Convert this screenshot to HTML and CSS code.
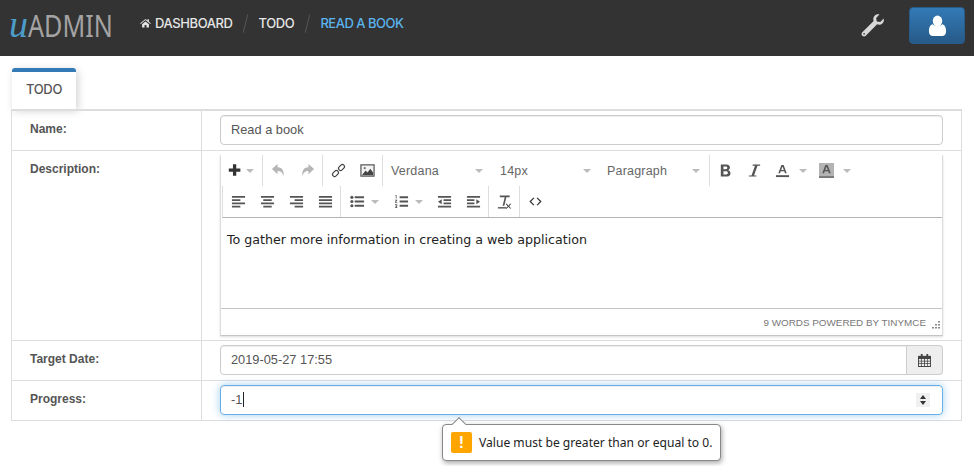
FILE: index.html
```html
<!DOCTYPE html>
<html lang="en">

<head>
    <meta charset="UTF-8">
    <title>Read a book</title>
    <link rel="stylesheet" href="styles.css">
</head>

<body>
    <header class="topbar">
        <div class="logo"><span class="logo-u">u</span><span class="logo-name">ADMIN</span></div>
        <nav class="crumbs">
            <svg class="home" viewBox="0 0 16 14"><path d="M8 1 0.3 7.4l.8 1L8 2.8l6.9 5.6.8-1L13 5.2V1.6h-2v1.9zM3 8.8V13.5h3.6V10h2.8v3.5H13V8.8L8 4.7z" fill="#e6e6e6"/></svg>
            <a class="crumb first">DASHBOARD</a>
            <span class="slash"></span>
            <a class="crumb">TODO</a>
            <span class="slash"></span>
            <a class="crumb active">READ A BOOK</a>
        </nav>
        <svg class="wrench" viewBox="0 0 26 26"><path d="M24.6 5.6c.5 1.6.2 3.7-1.1 5-1.6 1.6-3.8 2-5.7 1.2L6 23.6c-1 1-2.6 1-3.6 0s-1-2.6 0-3.6L14.2 8.2c-.8-1.900-.4-4.100 1.200-5.700 1.300-1.300 3.400-1.600 5-1.100l-3.600 3.700.6 3.700 3.700.6z" fill="#d8d8d8"/><circle cx="4.300" cy="21.700" r="1" fill="#555"/></svg>
        <button class="user-btn">
            <svg viewBox="0 0 20 20" width="19" height="22" preserveAspectRatio="none"><circle cx="10" cy="5.500" r="5" fill="#fff"/><path d="M1 15c0-4 1.500-6 4-6.500 1.200 1.200 3 1.800 5 1.800s3.800-.6 5-1.800c2.500.5 4 2.500 4 6.500 0 2.500-1.500 4-3.500 4h-11C2.500 19 1 17.500 1 15z" fill="#fff"/></svg>
        </button>
    </header>

    <div class="tabs">
        <div class="tab">TODO</div>
    </div>

    <div class="form">
        <div class="row">
            <label class="label">Name:</label>
            <div class="field">
                <input class="input" type="text" value="Read a book">
            </div>
        </div>

        <div class="row">
            <label class="label">Description:</label>
            <div class="field">
                <div class="editor">
                    <div class="toolbar">
                        <div class="group group-add">
                            <svg class="ico" viewBox="0 0 16 16"><path d="M1 6h5V1h4v5h5v4h-5v5H6v-5H1z" fill="#333" transform="translate(0 .5) scale(.88)"/></svg>
                            <span class="caret-down add-caret"></span>
                        </div>
                        <div class="group">
                            <span class="btn"><svg class="ico" viewBox="0 0 16 16"><path d="M7 1 1 6.500 7 12V8.500c3 0 5 1 6.500 5.500.5-5-1-9.500-6.500-9.500z" fill="#b5b5b5"/></svg></span>
                            <span class="btn"><svg class="ico" viewBox="0 0 16 16"><path d="M9 1l6 5.500L9 12V8.500c-3 0-5 1-6.500 5.500C2 9 3.500 4.500 9 4.500z" fill="#b5b5b5"/></svg></span>
                        </div>
                        <div class="group">
                            <span class="btn"><svg class="ico" viewBox="0 0 16 16"><g fill="none" stroke="#444" stroke-width="1.300"><rect x="-4.500" y="-2.200" width="7" height="4.400" rx="2.200" transform="translate(5.500 10.500) rotate(-45)"/><rect x="-2.500" y="-2.200" width="7" height="4.400" rx="2.200" transform="translate(10.500 5.500) rotate(-45)"/></g></svg></span>
                            <span class="btn"><svg class="ico" viewBox="0 0 16 16"><rect x="1" y="2" width="14" height="12" fill="#f4f4f4" stroke="#555" stroke-width="1.300"/><path d="M2 13l4-5 2 2 3-4 3 4v3z" fill="#444"/><circle cx="5" cy="5.500" r="1.200" fill="#777"/></svg></span>
                        </div>
                        <div class="group group-selects">
                            <span class="select select-font">Verdana<span class="caret-down"></span></span>
                            <span class="select select-size">14px<span class="caret-down"></span></span>
                            <span class="select select-block">Paragraph<span class="caret-down"></span></span>
                        </div>
                        <div class="group group-plain">
                            <span class="btn"><svg class="ico" viewBox="0 0 16 16"><path d="M3 1.500h6c2.500 0 3.700 1.400 3.700 3.300 0 1.300-.7 2.300-1.800 2.800 1.500.4 2.400 1.600 2.400 3.200 0 2.300-1.600 3.700-4.300 3.700H3zm2.800 2.200v2.900h2.600c1 0 1.500-.6 1.500-1.500s-.5-1.400-1.500-1.400zm0 5v3.600h3c1.100 0 1.700-.7 1.700-1.800s-.6-1.800-1.700-1.800z" fill="#555"/></svg></span>
                            <span class="btn"><svg class="ico" viewBox="0 0 16 16"><path d="M6 1.500h8v1.300h-2.800L7.500 13.200H10v1.300H2v-1.300h2.800L8.500 2.800H6z" fill="#555"/></svg></span>
                            <span class="btn btn-color"><svg class="ico" viewBox="0 0 16 16"><path d="M6.800 2h2.400l3.300 9h-1.900l-.7-2.100H6.100L5.400 11H3.500zm-.2 5.400h2.800L8 3.600z" fill="#555"/><rect x="1" y="13" width="14" height="2" fill="#555"/></svg><span class="caret-down"></span></span>
                            <span class="btn btn-color btn-back"><svg class="ico" viewBox="0 0 16 16"><rect x="0" y="0" width="16" height="16" fill="#b3b3b3"/><path d="M6.800 2h2.400l3.300 9h-1.900l-.7-2.100H6.100L5.400 11H3.500zm-.2 5.400h2.800L8 3.600z" fill="#555"/><rect x="0" y="14" width="16" height="2" fill="#777"/></svg><span class="caret-down"></span></span>
                        </div>
                    </div>
                    <div class="toolbar toolbar-second">
                        <div class="group">
                            <span class="btn"><svg class="ico" viewBox="0 0 16 16"><path d="M1 2h14v2H1zM1 5.500h9v2H1zM1 9h14v2H1zM1 12.500h9v2H1z" fill="#555"/></svg></span>
                            <span class="btn"><svg class="ico" viewBox="0 0 16 16"><path d="M1 2h14v2H1zM3.500 5.500h9v2h-9zM1 9h14v2H1zM3.500 12.500h9v2h-9z" fill="#555"/></svg></span>
                            <span class="btn"><svg class="ico" viewBox="0 0 16 16"><path d="M1 2h14v2H1zM6 5.500h9v2H6zM1 9h14v2H1zM6 12.500h9v2H6z" fill="#555"/></svg></span>
                            <span class="btn"><svg class="ico" viewBox="0 0 16 16"><path d="M1 2h14v2H1zM1 5.500h14v2H1zM1 9h14v2H1zM1 12.500h14v2H1z" fill="#555"/></svg></span>
                        </div>
                        <div class="group">
                            <span class="btn btn-list"><svg class="ico" viewBox="0 0 16 16"><path d="M5 2.500h10v2H5zM5 7h10v2H5zM5 11.500h10v2H5z" fill="#555"/><circle cx="2" cy="3.500" r="1.700" fill="#555"/><circle cx="2" cy="8" r="1.700" fill="#555"/><circle cx="2" cy="12.500" r="1.700" fill="#555"/></svg><span class="caret-down"></span></span>
                            <span class="btn btn-list"><svg class="ico" viewBox="0 0 16 16"><path d="M6 2.500h9v2H6zM6 7h9v2H6zM6 11.500h9v2H6z" fill="#555"/><path d="M1.500 1h1.200v3.800H1.900V1.800h-.4zM1 6h2.400v.8L2 8.400h1.500v.8H1v-.8l1.400-1.600H1zM1 11h2.400v3.800H1V14h1.500v-.7H1.400v-.7h1.100v-.8H1z" fill="#555"/></svg><span class="caret-down"></span></span>
                            <span class="btn"><svg class="ico" viewBox="0 0 16 16"><path d="M1 2h14v2H1zM7 5.500h8v2H7zM7 9h8v2H7zM1 12.500h14v2H1zM5 5.500v5.500L1 8.200z" fill="#555"/></svg></span>
                            <span class="btn"><svg class="ico" viewBox="0 0 16 16"><path d="M1 2h14v2H1zM1 5.500h8v2H1zM1 9h8v2H1zM1 12.500h14v2H1zM11 5.500v5.500l4-2.800z" fill="#555"/></svg></span>
                        </div>
                        <div class="group">
                            <span class="btn"><svg class="ico" viewBox="0 0 16 16"><path d="M3 1.500h10.500v2H10L7.800 12.500H6L8.200 3.500H3z" fill="#555"/><path d="M1 14h9v1.500H1z" fill="#555"/><path d="M10.500 10.500l1.700 1.900 1.700-1.900h1.300l-2.300 2.500 2.300 2.500h-1.300l-1.700-1.900-1.700 1.900H9.200l2.300-2.500-2.300-2.500z" fill="#333"/></svg></span>
                        </div>
                        <div class="group group-plain">
                            <span class="btn"><svg class="ico ico-code" viewBox="0 0 16 16"><path d="M6 3.500 1.500 8 6 12.500M10 3.500 14.500 8 10 12.500" fill="none" stroke="#333" stroke-width="1.500"/></svg></span>
                        </div>
                    </div>
                    <div class="content">To gather more information in creating a web application</div>
                    <div class="statusbar">
                        <span class="status-text">9 WORDS POWERED BY TINYMCE</span>
                        <svg class="grip" viewBox="0 0 9 9"><path d="M7 0h2v1.500H7zM4 3h2v1.500H4zM7 3h2v1.500H7zM1 6h2v1.500H1zM4 6h2v1.500H4zM7 6h2v1.500H7z" fill="#888"/></svg>
                    </div>
                </div>
            </div>
        </div>

        <div class="row">
            <label class="label">Target Date:</label>
            <div class="field">
                <div class="input-group">
                    <input class="input input-joined" type="text" value="2019-05-27 17:55">
                    <span class="addon">
                        <svg viewBox="0 0 14 14" width="13" height="13"><path d="M0 2h14v12H0z" fill="#444"/><path d="M3 0h2v3.500H3zM9 0h2v3.500H9z" fill="#444"/><path d="M1 5.500h2.200v1.800H1zM4 5.500h2.500v1.800H4zM7.400 5.500h2.600v1.800H7.400zM10.800 5.500H13v1.800h-2.200zM1 8.200h2.200V10H1zM4 8.200h2.500V10H4zM7.400 8.200h2.600V10H7.400zM10.800 8.200H13V10h-2.200zM1 10.900h2.200v1.900H1zM4 10.900h2.500v1.900H4zM7.400 10.900h2.600v1.900H7.400zM10.800 10.900H13v1.900h-2.200z" fill="#eee"/></svg>
                    </span>
                </div>
            </div>
        </div>

        <div class="row">
            <label class="label">Progress:</label>
            <div class="field">
                <div class="input input-focus">
                    <span>-1</span><span class="text-cursor"></span>
                    <span class="spinner"><span class="spin-up"></span><span class="spin-down"></span></span>
                </div>
                <div class="valid-tip">
                    <span class="valid-arrow"></span>
                    <span class="valid-icon">!</span>
                    <span class="valid-text">Value must be greater than or equal to 0.</span>
                </div>
            </div>
        </div>
    </div>
</body>

</html>
```

FILE: styles.css
```css
html,
body {
    height: 100%;
}

body {
    margin: 0;
    background: #fff;
    color: #555;
    font-family: "Liberation Sans", Arial, sans-serif;
    font-size: 13px;
}

.topbar {
    display: flex;
    align-items: center;
    height: 56px;
    background: #333;
    padding: 0 9px 0 9px;
    box-sizing: border-box;
}

.logo {
    width: 131px;
    margin-top: -8px;
    font-family: "Noto Sans", sans-serif;
    font-size: 31px;
    color: #a3a3a3;
    white-space: nowrap;
}

.logo-u {
    font-family: "Liberation Serif", serif;
    font-style: italic;
    font-size: 38px;
    color: #4d9cc9;
}

.logo-name {
    display: inline-block;
    transform: scaleX(0.81);
    transform-origin: left center;
}

.crumbs {
    display: flex;
    align-items: center;
    flex: 1;
    margin-top: -10px;
    font-family: "Inter", sans-serif;
    font-weight: 500;
    font-size: 13px;
    letter-spacing: -0.4px;
    color: #e6e6e6;
}

.home {
    width: 11px;
    height: 10px;
    margin-right: 4px;
}

.slash {
    width: 1px;
    height: 19px;
    margin: 0 12.500px;
    background: #555;
    transform: rotate(14deg);
}

.active {
    color: #5bb4ee;
    letter-spacing: -0.5px;
}

.wrench {
    width: 25px;
    height: 25px;
    margin: -6px 24px 0 0;
}

.user-btn {
    display: flex;
    align-items: center;
    justify-content: center;
    width: 56px;
    height: 37px;
    margin-top: -5px;
    border: 1px solid #2a5c8a;
    border-radius: 4px;
    background: linear-gradient(#337ab7, #265a88);
    padding: 0;
}

.tabs {
    padding: 12px 0 0 12px;
    height: 41px;
}

.tab {
    width: 64px;
    height: 41px;
    box-sizing: border-box;
    border-top: 4px solid #337ab7;
    border-radius: 3px 3px 0 0;
    background: #fff;
    box-shadow: 2px 2px 8px rgba(0, 0, 0, 0.18);
    font-family: "Inter", sans-serif;
    font-weight: 500;
    font-size: 13px;
    letter-spacing: -0.3px;
    line-height: 35px;
    text-align: center;
    color: #555;
}

.form {
    margin: 0 11px;
    border: 1px solid #ddd;
    border-top: 2px solid #ddd;
    width: 951px;
    box-sizing: border-box;
}

.row {
    display: flex;
    border-top: 1px solid #ddd;
}

.row:first-child {
    border-top: none;
}

.label {
    width: 190px;
    padding: 11px 0 0 18px;
    box-sizing: border-box;
    border-right: 1px solid #ddd;
    font-size: 12px;
    font-weight: bold;
    color: #555;
}

.field {
    position: relative;
    width: 723px;
    padding: 4px 0 5px;
    margin-left: 18px;
}

.input {
    display: flex;
    align-items: center;
    width: 100%;
    height: 30px;
    box-sizing: border-box;
    padding: 0 10px 2px;
    border: 1px solid #ccc;
    border-radius: 4px;
    font-family: "Liberation Sans", Arial, sans-serif;
    font-size: 12.800px;
    color: #555;
    box-shadow: inset 0 1px 1px rgba(0, 0, 0, 0.075);
    outline: none;
}

.input-group {
    display: flex;
}

.input-joined {
    flex: 1;
    width: auto;
    border-radius: 4px 0 0 4px;
}

.addon {
    display: flex;
    align-items: center;
    justify-content: center;
    width: 36px;
    box-sizing: border-box;
    border: 1px solid #ccc;
    border-left: none;
    border-radius: 0 4px 4px 0;
    background: #eee;
}

.input-focus {
    border-color: #66afe9;
    box-shadow: inset 0 1px 1px rgba(0, 0, 0, 0.075), 0 0 8px rgba(102, 175, 233, 0.6);
}

.text-cursor {
    width: 1px;
    height: 15px;
    background: #222;
    margin-left: 1px;
}

.spinner {
    display: flex;
    flex-direction: column;
    align-items: center;
    justify-content: center;
    gap: 2px;
    width: 14px;
    height: 14px;
    margin: 2px 2px 0 auto;
    background: #f0f0f0;
}

.spin-up {
    border: 3px solid transparent;
    border-top: none;
    border-bottom: 4px solid #333;
}

.spin-down {
    border: 3px solid transparent;
    border-bottom: none;
    border-top: 4px solid #333;
}

/* browser validation popup */
.valid-tip {
    position: absolute;
    left: 222px;
    top: 43px;
    z-index: 5;
    display: flex;
    align-items: center;
    gap: 7px;
    width: 279px;
    height: 37px;
    box-sizing: border-box;
    padding: 0 8px;
    background: #fff;
    border: 1px solid #888;
    border-radius: 4px;
    box-shadow: 1px 2px 5px rgba(0, 0, 0, 0.35);
    font-family: "Noto Sans", sans-serif;
    font-size: 12.100px;
    color: #222;
    white-space: nowrap;
}

.valid-arrow {
    position: absolute;
    left: 11px;
    top: -6px;
    width: 9px;
    height: 9px;
    background: #fff;
    border-left: 1px solid #888;
    border-top: 1px solid #888;
    transform: rotate(45deg);
}

.valid-icon {
    flex: none;
    width: 21px;
    height: 21px;
    border-radius: 2px;
    background: #ffa500;
    color: #fff;
    font-family: "Liberation Sans", sans-serif;
    font-weight: bold;
    font-size: 16px;
    line-height: 21px;
    text-align: center;
}

/* editor */
.editor {
    border: 1px solid #ddd;
    border-top: none;
    border-bottom: 1px solid #c5c5c5;
    margin-bottom: -1px;
    box-shadow: 0 1px 2px rgba(0, 0, 0, 0.15);
}

.toolbar {
    display: flex;
    height: 31px;
    align-items: stretch;
}

.toolbar-second {
    height: 32px;
    box-sizing: border-box;
    margin-left: 1px;
    border-left: 1px solid #ddd;
    border-bottom: 1px solid #b5b5b5;
}

.group {
    display: flex;
    align-items: center;
    padding-left: 1px;
    border-right: 1px solid #ddd;
}

.group-plain {
    border-right: none;
}

.group-add {
    width: 42px;
    padding-left: 7px;
    box-sizing: border-box;
}

.group-selects {
    width: 327px;
    padding-left: 0;
    box-sizing: border-box;
}

.btn {
    display: flex;
    align-items: center;
    justify-content: center;
    width: 29px;
    flex: none;
}

.btn-color {
    justify-content: flex-start;
    width: 50px;
    padding-left: 6px;
    box-sizing: border-box;
}

.btn-back {
    padding-left: 0;
}

.btn-color .caret-down {
    margin-left: 9px;
}

.btn-list {
    justify-content: flex-start;
    width: 44px;
    padding-left: 8px;
    box-sizing: border-box;
}

.ico {
    width: 15px;
    height: 15px;
    flex: none;
}

.ico-code {
    width: 13px;
    height: 13px;
}

.caret-down {
    display: inline-block;
    border: 4px solid transparent;
    border-bottom: none;
    border-top: 4px solid #bbb;
    margin-left: 6px;
}

.add-caret {
    margin-left: 3px;
}

.select {
    display: flex;
    align-items: center;
    justify-content: space-between;
    box-sizing: border-box;
    padding: 0 9px 0 8px;
    font-size: 12.500px;
    letter-spacing: 0.2px;
    color: #666;
}

.select-font {
    width: 109px;
}

.select-size {
    width: 107px;
    padding-right: 8px;
}

.select-block {
    width: 110px;
}

.content {
    height: 90px;
    padding: 14px 6px 0;
    box-sizing: border-box;
    font-family: "DejaVu Sans", Verdana, sans-serif;
    font-size: 12.650px;
    color: #222;
}

.statusbar {
    display: flex;
    align-items: center;
    justify-content: flex-end;
    height: 27px;
    box-sizing: border-box;
    border-top: 1px solid #c5c5c5;
    padding-right: 2px;
    font-size: 9.900px;
    color: #777;
}

.status-text {
    margin-right: 5px;
}

.grip {
    width: 9px;
    height: 9px;
    margin-top: 7px;
}
```
